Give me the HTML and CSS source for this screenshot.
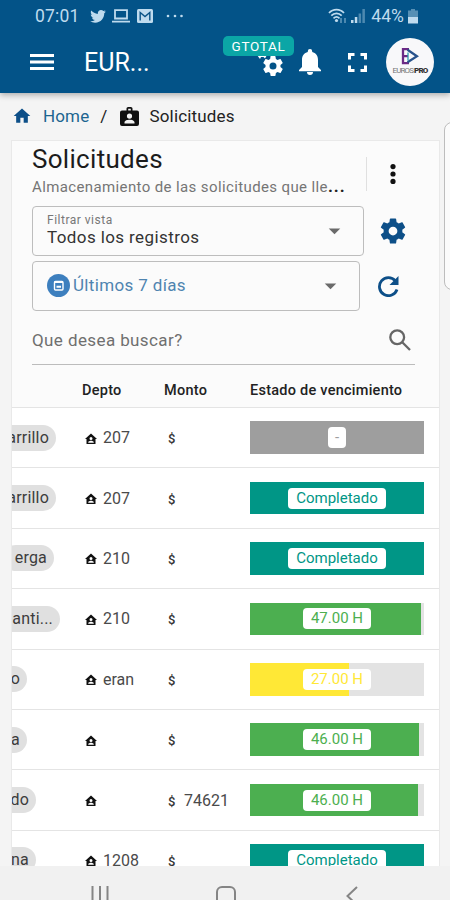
FILE: index.html
```html
<!DOCTYPE html>
<html lang="es">
<head>
    <meta charset="UTF-8">
    <meta name="viewport" content="width=device-width, initial-scale=1.0">
    <title>Solicitudes</title>
    <link rel="stylesheet" href="styles.css">
</head>
<body>
    <!-- Icon sprite -->
    <svg class="sprite" width="0" height="0">
        <symbol id="cog" viewBox="0 0 24 24"><path d="M12 15.5A3.5 3.5 0 0 1 8.5 12 3.5 3.5 0 0 1 12 8.5a3.5 3.5 0 0 1 3.5 3.5 3.5 3.5 0 0 1-3.5 3.5m7.43-2.53c.04-.32.07-.64.07-.97s-.03-.66-.07-1l2.11-1.63c.19-.15.24-.42.12-.64l-2-3.46c-.12-.22-.39-.31-.61-.22l-2.49 1c-.52-.39-1.06-.73-1.69-.98l-.37-2.65A.506.506 0 0 0 14 2h-4c-.25 0-.46.18-.5.42l-.37 2.65c-.63.25-1.17.59-1.69.98l-2.49-1c-.22-.09-.49 0-.61.22l-2 3.46c-.13.22-.07.49.12.64L4.57 11c-.04.34-.07.67-.07 1s.03.65.07.97l-2.11 1.66c-.19.15-.25.42-.12.64l2 3.46c.12.22.39.3.61.22l2.49-1.01c.52.4 1.06.74 1.69.99l.37 2.65c.04.24.25.42.5.42h4c.25 0 .46-.18.5-.42l.37-2.65c.63-.26 1.17-.59 1.69-.99l2.49 1.01c.22.08.49 0 .61-.22l2-3.46c.12-.22.07-.49-.12-.64z"/></symbol>
        <symbol id="home" viewBox="0 0 24 24"><path d="M10 20v-6h4v6h5v-8h3L12 3 2 12h3v8z"/></symbol>
        <symbol id="house" viewBox="0 0 24 24"><path fill-rule="evenodd" d="M12 1 0 12h3V22h18V12h3zM12 8a3 3 0 1 1 0 6 3 3 0 0 1 0-6M6.500 19.500v-1.200c0-2 3.500-3 5.500-3s5.500 1 5.500 3v1.200z"/></symbol>
        <symbol id="caret" viewBox="0 0 24 24"><path d="M6.500 10l5.500 5.500 5.500-5.500z"/></symbol>
    </svg>

    <div class="phone">
        <header class="top">
            <div class="status-bar">
                <span class="clock">07:01</span>
                <svg class="st-twitter" viewBox="0 0 24 24"><path d="M22.460 6c-.77.350-1.600.580-2.460.690.880-.530 1.560-1.370 1.880-2.380-.830.500-1.750.850-2.720 1.050C18.370 4.500 17.260 4 16 4c-2.350 0-4.270 1.920-4.270 4.290 0 .340.040.670.110.980C8.280 9.090 5.110 7.380 3 4.790c-.370.630-.580 1.370-.580 2.150 0 1.490.750 2.810 1.910 3.560-.710 0-1.370-.200-1.950-.500v.030c0 2.080 1.480 3.820 3.440 4.210a4.220 4.220 0 0 1-1.930.070 4.280 4.280 0 0 0 4 2.980 8.521 8.521 0 0 1-5.330 1.840c-.340 0-.680-.020-1.020-.060C3.440 20.290 5.700 21 8.120 21 16 21 20.330 14.460 20.330 8.790c0-.190 0-.370-.010-.560.840-.600 1.560-1.360 2.140-2.230z"/></svg>
                <svg class="st-laptop" viewBox="0 0 18 14"><path d="M3 1.200h12v8.300H3zM0 12.700h18" fill="none" stroke="currentColor" stroke-width="1.800"/></svg>
                <svg class="st-mail" viewBox="0 0 16 14"><rect width="16" height="14" rx="1.500"/><path d="M3.200 11.500V3.500L8 7.500l4.800-4v8" fill="none" stroke="#0a5386" stroke-width="1.400"/></svg>
                <svg class="st-more" viewBox="0 0 18 4"><circle cx="2" cy="2" r="1.300"/><circle cx="9" cy="2" r="1.300"/><circle cx="15.500" cy="2" r="1.300"/></svg>
                <span class="spacer"></span>
                <svg class="st-wifi" viewBox="0 0 20 16"><g fill="none" stroke="currentColor" stroke-width="1.700"><path d="M1 5C5 .5 12 .5 16 5"/><path d="M3.300 7.700c3-3.200 7.400-3.200 10.400 0"/><path d="M5.500 10.300c2-1.800 4-1.800 6 0"/></g><circle cx="8.500" cy="12.500" r="1.600"/><path opacity=".4" d="M12 10h2v5h-2zM16 10h2v5h-2z"/></svg>
                <svg class="st-signal" viewBox="0 0 14 14"><path d="M0 11h2.500v3H0zM3.800 8h2.500v6H3.800z"/><path opacity=".4" d="M7.600 4.500h2.500V14H7.600zM11.400 0h2.500v14h-2.500z"/></svg>
                <span class="percent">44%</span>
                <svg class="st-battery" viewBox="0 0 10 15"><path opacity=".45" d="M3 0h4v1.500h3V8H0V1.500h3z"/><path d="M0 8h10v6.500H0z"/></svg>
            </div>
            <div class="app-bar">
                <svg class="menu" viewBox="0 0 24 18"><path d="M0 1h24v3H0zM0 7.500h24v3H0zM0 14h24v3H0z"/></svg>
                <span class="brand">EUR...</span>
                <span class="spacer"></span>
                <div class="config">
                    <svg class="cog-small" viewBox="0 0 10 5"><path d="M0 0h10L8 3.500 6.500 2H4L3 4z"/></svg>
                    <svg class="cog-big"><use href="#cog"/></svg>
                    <span class="badge">GTOTAL</span>
                </div>
                <svg class="bell" viewBox="0 0 22 26"><path d="M11 26a3 3 0 0 0 3-3H8a3 3 0 0 0 3 3M19 18v-7c0-4.200-2.200-7-5.800-7.900V2.300a2.200 2.200 0 0 0-4.400 0v.8C5.200 4 3 6.800 3 11v7l-3 3v1.300h22V21z"/></svg>
                <svg class="full" viewBox="0 0 19 19"><path d="M0 0h6.500v3H3v3.500H0zM12.500 0H19v6.500h-3V3h-3.500zM16 12.500h3V19h-6.500v-3H16zM0 12.500h3V16h3.500v3H0z"/></svg>
                <div class="avatar">
                    <svg viewBox="0 0 18 19" stroke-width="2.300"><path d="M8 2.200H2v14h6M2 9.200h5" stroke="#6b2a86"/><path d="M6.500 2.800 16 9.200l-9.500 6" stroke="#27528c"/><path d="M7 5.500v8" stroke="#2b9bb0" stroke-width="1.300"/></svg>
                    <span class="avatar-text"><i>EUROS</i> PRO</span>
                </div>
            </div>
        </header>

        <nav class="breadcrumb">
            <svg class="bc-home"><use href="#home"/></svg>
            <a>Home</a>
            <span class="slash">/</span>
            <svg class="bc-badge" viewBox="0 0 19 19"><path fill-rule="evenodd" d="M6.500 3.500V1.800C6.500.8 7.200 0 8.200 0h2.600c1 0 1.700.8 1.700 1.800v1.700H17a2 2 0 0 1 2 2V17a2 2 0 0 1-2 2H2a2 2 0 0 1-2-2V5.500a2 2 0 0 1 2-2zM8.200 1.700v1.800h2.600V1.700zM9.500 6.500a2.600 2.600 0 1 0 0 5.200 2.600 2.600 0 0 0 0-5.200M4.500 16.500h10v-1.300c0-1.700-3-2.500-5-2.500s-5 .8-5 2.500z"/></svg>
            <span>Solicitudes</span>
        </nav>

        <main class="card">
            <div class="card-top">
                <div class="title-row">
                    <div class="titles">
                        <h1>Solicitudes</h1>
                        <p>Almacenamiento de las solicitudes que lle<b>...</b></p>
                    </div>
                    <div class="more">
                        <svg viewBox="0 0 6 20"><circle cx="3" cy="2.600" r="2.600"/><circle cx="3" cy="10" r="2.600"/><circle cx="3" cy="17.400" r="2.600"/></svg>
                    </div>
                </div>
                <div class="filter-row">
                    <div class="select view">
                        <div>
                            <label>Filtrar vista</label>
                            <span class="value">Todos los registros</span>
                        </div>
                        <svg class="caret"><use href="#caret"/></svg>
                    </div>
                    <svg class="cog-blue"><use href="#cog"/></svg>
                </div>
                <div class="filter-row second">
                    <div class="select range">
                        <svg class="cal" viewBox="0 0 23 23"><circle cx="11.500" cy="11.500" r="11.500" fill="#3d7fbe"/><rect x="7.500" y="7.500" width="8.500" height="8.500" rx="1" fill="none" stroke="#fff" stroke-width="1.400"/><path d="M7.500 8h8.500M9.500 12.800h4.500" stroke="#fff" stroke-width="2"/></svg>
                        <span class="days">Últimos 7 días</span>
                        <svg class="caret"><use href="#caret"/></svg>
                    </div>
                    <svg class="reload" viewBox="0 0 21 21"><path d="M17.300 4.800A9 9 0 1 0 19 13.500" fill="none" stroke="#0d4f88" stroke-width="2.800"/><path d="M20.500 0v9h-9z" fill="#0d4f88"/></svg>
                </div>
                <div class="search">
                    <span>Que desea buscar?</span>
                    <svg viewBox="0 0 22 22"><circle cx="8.200" cy="8.200" r="6.900"/><path d="M13 13l8 8"/></svg>
                </div>
                <div class="row head">
                    <span></span>
                    <span>Depto</span>
                    <span>Monto</span>
                    <span>Estado de vencimiento</span>
                </div>
            </div>

            <div class="row">
                <div class="name"><span class="chip">arrillo</span></div>
                <div class="depto"><svg><use href="#house"/></svg>207</div>
                <div class="monto"><b>$</b></div>
                <div class="bar none"><span>-</span></div>
            </div>
            <div class="row">
                <div class="name"><span class="chip">arrillo</span></div>
                <div class="depto"><svg><use href="#house"/></svg>207</div>
                <div class="monto"><b>$</b></div>
                <div class="bar done"><span>Completado</span></div>
            </div>
            <div class="row">
                <div class="name mid"><span class="chip">erga</span></div>
                <div class="depto"><svg><use href="#house"/></svg>210</div>
                <div class="monto"><b>$</b></div>
                <div class="bar done"><span>Completado</span></div>
            </div>
            <div class="row">
                <div class="name wide"><span class="chip">anti...</span></div>
                <div class="depto"><svg><use href="#house"/></svg>210</div>
                <div class="monto"><b>$</b></div>
                <div class="bar ok" style="--fill: 98.500%"><span>47.00 H</span></div>
            </div>
            <div class="row">
                <div class="name tiny"><span class="chip">o</span></div>
                <div class="depto"><svg><use href="#house"/></svg>eran</div>
                <div class="monto"><b>$</b></div>
                <div class="bar warn" style="--fill: 57%"><span>27.00 H</span></div>
            </div>
            <div class="row">
                <div class="name tiny"><span class="chip">a</span></div>
                <div class="depto"><svg><use href="#house"/></svg></div>
                <div class="monto"><b>$</b></div>
                <div class="bar ok" style="--fill: 97%"><span>46.00 H</span></div>
            </div>
            <div class="row">
                <div class="name short"><span class="chip">do</span></div>
                <div class="depto"><svg><use href="#house"/></svg></div>
                <div class="monto"><b>$</b>74621</div>
                <div class="bar ok" style="--fill: 96.300%"><span>46.00 H</span></div>
            </div>
            <div class="row">
                <div class="name short"><span class="chip">na</span></div>
                <div class="depto"><svg><use href="#house"/></svg>1208</div>
                <div class="monto"><b>$</b></div>
                <div class="bar done"><span>Completado</span></div>
            </div>
        </main>

        <footer class="nav-bar">
            <svg viewBox="0 0 18 18" class="nav-recent"><path d="M1.500 0v18M9 0v18M16.500 0v18"/></svg>
            <svg viewBox="0 0 20 20" class="nav-home"><rect x="1" y="1" width="18" height="18" rx="5"/></svg>
            <svg viewBox="0 0 12 20" class="nav-back"><path d="M11 1 1.500 10l9.500 9"/></svg>
        </footer>

        <div class="side-tab"></div>
    </div>
</body>
</html>
```
FILE: styles.css
```css
* {
    margin: 0;
    padding: 0;
    box-sizing: border-box;
}

body {
    font-family: Roboto, "Liberation Sans", sans-serif;
    background: #f4f4f4;
    color: #3c3c3c;
}

svg {
    display: block;
    flex: none;
    fill: currentColor;
}

.sprite {
    position: absolute;
}

.phone {
    position: relative;
    width: 450px;
    height: 900px;
    overflow: hidden;
    display: flex;
    flex-direction: column;
}

.spacer {
    flex: 1;
}

/* Status bar + app bar */
.top {
    flex: none;
    height: 93px;
    background: #035388;
    box-shadow: 0 2px 6px rgba(0, 0, 0, 0.3);
}

.status-bar {
    display: flex;
    align-items: center;
    height: 32px;
    padding: 0 32px 0 35px;
    color: #bfdbee;
    font-size: 17.5px;
}

.clock {
    width: 54px;
    letter-spacing: 0.2px;
}

.st-twitter {
    width: 18px;
    height: 18px;
}

.st-laptop {
    width: 18px;
    height: 14px;
    margin-left: 5px;
}

.st-mail {
    width: 16px;
    height: 14px;
    margin-left: 7px;
}

.st-more {
    width: 18px;
    height: 4px;
    margin-left: 13px;
}

.st-wifi {
    width: 20px;
    height: 16px;
    margin-right: 3px;
}

.st-signal {
    width: 14px;
    height: 14px;
    margin-right: 6px;
}

.percent {
    letter-spacing: 0.1px;
}

.st-battery {
    width: 10px;
    height: 15px;
    margin-left: 4px;
}

.app-bar {
    display: flex;
    align-items: center;
    height: 60px;
    padding: 0 17px 0 30px;
    color: #fff;
}

.menu {
    width: 24px;
    height: 18px;
}

.brand {
    margin-left: 30px;
    font-size: 25px;
}

.config {
    position: relative;
    width: 30px;
    height: 24px;
    margin-top: 8px;
}

.cog-big {
    width: 24px;
    height: 24px;
    margin-left: 5px;
}

.cog-small {
    position: absolute;
    left: 1px;
    top: 1px;
    width: 10px;
    height: 5px;
}

.badge {
    position: absolute;
    left: -33px;
    top: -18px;
    width: 71px;
    height: 20px;
    border-radius: 5px;
    background: #0ba6a6;
    font-size: 13.5px;
    line-height: 20px;
    letter-spacing: 0.7px;
    text-align: center;
}

.bell {
    width: 22px;
    height: 26px;
    margin-left: 13px;
}

.full {
    width: 19px;
    height: 19px;
    margin-left: 27px;
}

.avatar {
    display: flex;
    flex-direction: column;
    align-items: center;
    width: 48px;
    height: 48px;
    margin: 0 -1px 0 19px;
    padding-top: 9px;
    border-radius: 50%;
    background: #f8f8fa;
}

.avatar svg {
    width: 18px;
    height: 19px;
    fill: none;
}

.avatar-text {
    color: #333;
    font-size: 8px;
    font-weight: 900;
    line-height: 9px;
    letter-spacing: -0.9px;
    white-space: nowrap;
}

.avatar-text i {
    font-style: normal;
    font-weight: 400;
    color: #777;
}

/* Breadcrumb */
.breadcrumb {
    flex: none;
    display: flex;
    align-items: center;
    height: 46px;
    padding-left: 12px;
    color: #222;
    font-size: 17px;
    letter-spacing: 0.15px;
}

.breadcrumb a {
    margin-left: 11px;
    color: #1d6590;
}

.bc-home {
    width: 20px;
    height: 20px;
    color: #0d4f88;
}

.slash {
    margin: 0 12px 0 11px;
}

.bc-badge {
    width: 19px;
    height: 19px;
    margin-right: 11px;
    color: #111;
}

/* Card */
.card {
    flex: 1;
    min-height: 0;
    overflow: hidden;
    margin: 1px 10px 0 11px;
    border: 1px solid #e9e9e9;
    border-bottom: 0;
    background: #fff;
}

.card-top {
    background: #fbfbfb;
}

.title-row {
    display: flex;
    height: 65px;
    padding-left: 20px;
}

.titles {
    width: 334px;
}

h1 {
    margin-top: 2px;
    color: #1c1c1c;
    font-size: 26px;
    font-weight: 400;
    line-height: 33px;
    letter-spacing: 0.3px;
}

.titles p {
    color: #757575;
    font-size: 15px;
    line-height: 20px;
    letter-spacing: 0.38px;
    white-space: nowrap;
}

.titles b {
    color: #222;
    font-size: 17px;
    letter-spacing: 1px;
}

.more {
    display: flex;
    align-items: center;
    height: 34px;
    margin-top: 16px;
    padding-left: 23px;
    border-left: 1px solid #e0e0e0;
    color: #111;
}

.more svg {
    width: 6px;
    height: 20px;
}

.filter-row {
    display: flex;
    align-items: center;
    height: 50px;
    padding-left: 20px;
}

.filter-row.second {
    margin-top: 5px;
}

.select {
    display: flex;
    align-items: center;
    height: 50px;
    border: 1px solid #bdbdbd;
    border-radius: 4px;
    padding: 0 16px 2px 14px;
}

.select .caret {
    width: 25px;
    height: 25px;
    margin-left: auto;
    color: #6a6a6a;
}

.view {
    width: 332px;
}

.select label {
    display: block;
    color: #777;
    font-size: 12px;
    line-height: 14px;
    letter-spacing: 0.5px;
}

.value {
    display: block;
    color: #333;
    font-size: 17px;
    line-height: 21px;
    letter-spacing: 0.4px;
}

.cog-blue {
    width: 30px;
    height: 30px;
    margin-left: 14px;
    color: #0d4f88;
}

.range {
    width: 328px;
}

.cal {
    width: 23px;
    height: 23px;
}

.days {
    margin-left: 3px;
    color: #4f84b0;
    font-size: 17px;
    letter-spacing: 0.35px;
}

.reload {
    width: 21px;
    height: 21px;
    margin-left: 18px;
}

.search {
    display: flex;
    align-items: center;
    justify-content: space-between;
    height: 54px;
    margin: 0 24px 0 20px;
    padding: 4px 4px 0 0;
    border-bottom: 1px solid #bcbcbc;
    color: #6f6f6f;
    font-size: 17px;
    letter-spacing: 0.4px;
}

.search svg {
    width: 22px;
    height: 22px;
    fill: none;
    stroke: #666;
    stroke-width: 2.3;
}

/* Table */
.row {
    display: grid;
    grid-template-columns: 70px 82px 86px 174px;
    align-items: center;
    height: 60.4px;
    border-bottom: 1px solid #e4e4e4;
    font-size: 16px;
}

.row.head {
    height: 43px;
    padding-top: 8px;
    color: #222;
    font-size: 14.5px;
    font-weight: 500;
    letter-spacing: 0.25px;
}

.name {
    display: flex;
    justify-content: flex-end;
    overflow: hidden;
    padding-right: 26px;
}

.name.mid {
    padding-right: 28px;
}

.name.wide {
    padding-right: 22px;
}

.name.tiny {
    padding-right: 55px;
}

.name.short {
    padding-right: 46px;
}

.chip {
    height: 26px;
    padding: 0 7px 0 12px;
    border-radius: 13px;
    background: #e0e0e0;
    line-height: 25px;
    letter-spacing: 0.2px;
}

.depto,
.monto {
    display: flex;
    align-items: center;
    color: #4a4a4a;
}

.depto svg {
    width: 12px;
    height: 12px;
    margin: 2px 6px 0 3px;
    color: #111;
}

.monto b {
    width: 16px;
    margin: 2px 0 0 4px;
    color: #333;
    font-size: 13px;
    font-weight: 500;
}

.bar {
    display: flex;
    align-items: center;
    justify-content: center;
    height: 32.5px;
    background: linear-gradient(to right, var(--color) var(--fill, 100%), #e3e3e3 var(--fill, 100%));
}

.bar span {
    height: 21px;
    padding: 0 8px;
    border-radius: 4px;
    background: #fff;
    color: var(--color);
    font-size: 15px;
    line-height: 20px;
}

.bar.none {
    --color: #9e9e9e;
}

.bar.none span {
    padding: 0 7px;
}

.bar.done {
    --color: #009686;
}

.bar.ok {
    --color: #4caf50;
}

.bar.warn {
    --color: #ffe836;
}

/* Android navigation */
.nav-bar {
    flex: none;
    display: flex;
    height: 34px;
    padding: 20px 0 0 91px;
    background: #f1f1f1;
    overflow: hidden;
}

.nav-bar svg {
    fill: none;
    stroke: #858585;
    stroke-width: 2;
}

.nav-recent {
    width: 18px;
    height: 18px;
}

.nav-home {
    width: 20px;
    height: 20px;
    margin-left: 107px;
}

.nav-back {
    width: 12px;
    height: 20px;
    margin-left: 110px;
}

/* Panel handle on the right edge */
.side-tab {
    position: absolute;
    left: 444px;
    top: 122px;
    width: 20px;
    height: 168px;
    border: 1px solid #bdbdbd;
    border-radius: 8px;
    background: #fbfbfb;
}
```
